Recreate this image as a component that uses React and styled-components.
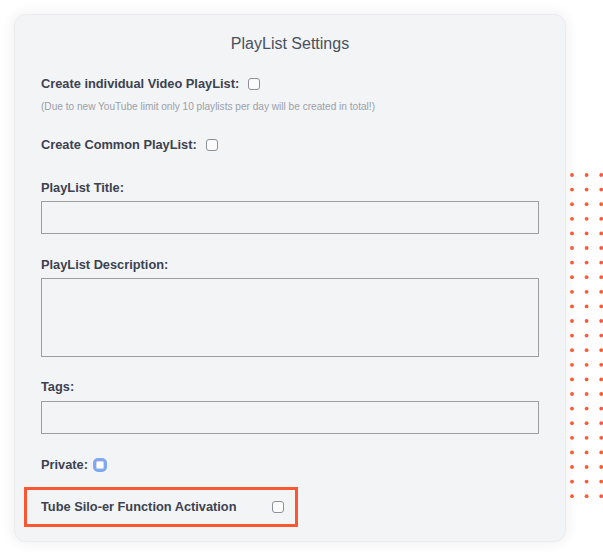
import React from "react";
import styled, { createGlobalStyle } from "styled-components";

const GlobalStyle = createGlobalStyle`
  html, body { margin: 0; padding: 0; background: #ffffff; }
  body { font-family: "Liberation Sans", Arial, Helvetica, sans-serif; }
  * { box-sizing: border-box; }
`;

const Page = styled.div`
  position: relative;
  width: 603px;
  height: 557px;
  padding: 14px 0 0 14px;
  overflow: hidden;
`;

const Dots = styled.svg`
  position: absolute;
  left: 568px;
  top: 171px;
  z-index: 0;
`;

const Card = styled.div`
  position: relative;
  z-index: 1;
  width: 552px;
  padding: 19px 26px 14px;
  background: #f3f4f6;
  border-radius: 12px;
  border: 1px solid #ebecef;
  box-shadow: 0 0 12px 3px rgba(0, 0, 0, 0.05);
  display: flex;
  flex-direction: column;
`;

const Title = styled.h2`
  margin: 0;
  font-size: 16px;
  line-height: 20px;
  font-weight: 400;
  color: #485060;
  text-align: center;
`;

const Row = styled.div`
  display: flex;
  align-items: center;
  height: 16px;
  margin-top: ${(p) => p.$mt}px;
`;

const Label = styled.label`
  display: block;
  font-size: 12.8px;
  line-height: 16px;
  font-weight: 700;
  color: #3b4250;
  margin-top: ${(p) => p.$mt || 0}px;
`;

const Note = styled.div`
  margin-top: 8px;
  font-size: 10.1px;
  line-height: 14px;
  color: #9ba0a8;
`;

const Check = styled.input.attrs({ type: "checkbox" })`
  appearance: none;
  -webkit-appearance: none;
  width: 12px;
  height: 12px;
  margin: 0 0 0 ${(p) => p.$ml || 0}px;
  border: 1px solid #8d9199;
  border-radius: 3px;
  background: #fbfbfc;
  flex: none;
`;

const FocusCheck = styled.input.attrs({ type: "checkbox" })`
  appearance: none;
  -webkit-appearance: none;
  width: 14px;
  height: 14px;
  margin: 0 0 0 5px;
  border: 3px solid #7ea8f1;
  border-radius: 5px;
  background: #ffffff;
  box-shadow: inset 0 0 0 1px #d7dbe2;
  flex: none;
`;

const TextInput = styled.input`
  display: block;
  width: 100%;
  height: 33px;
  margin-top: ${(p) => p.$mt}px;
  border: 1px solid #9c9ea3;
  background: transparent;
  outline: none;
`;

const TextArea = styled.textarea`
  display: block;
  width: 100%;
  height: 79px;
  margin-top: 5px;
  border: 1px solid #9c9ea3;
  background: transparent;
  resize: none;
  outline: none;
`;

const Highlight = styled.div`
  display: flex;
  align-items: center;
  justify-content: space-between;
  width: 274px;
  height: 40px;
  margin: 14px 0 0 -17px;
  padding: 0 11px 0 14px;
  border: 3px solid #fc5632;
`;

function DotGrid() {
  const cols = 3;
  const rows = 23;
  const dots = [];
  for (let r = 0; r < rows; r++) {
    for (let c = 0; c < cols; c++) {
      dots.push(
        <circle key={`${r}-${c}`} cx={4 + c * 14.6} cy={4 + r * 14.6} r={1.9} fill="#ff5a35" />
      );
    }
  }
  return (
    <Dots width="40" height="336" viewBox="0 0 40 336">
      {dots}
    </Dots>
  );
}

export default function App() {
  return (
    <>
      <GlobalStyle />
      <Page>
        <DotGrid />
        <Card>
          <Title>PlayList Settings</Title>
          <Row $mt={22}>
            <Label>Create individual Video PlayList:</Label>
            <Check $ml={9} />
          </Row>
          <Note>(Due to new YouTube limit only 10 playlists per day will be created in total!)</Note>
          <Row $mt={23}>
            <Label>Create Common PlayList:</Label>
            <Check $ml={9} />
          </Row>
          <Label $mt={27}>PlayList Title:</Label>
          <TextInput $mt={5} />
          <Label $mt={23}>PlayList Description:</Label>
          <TextArea />
          <Label $mt={22}>Tags:</Label>
          <TextInput $mt={6} />
          <Row $mt={23}>
            <Label>Private:</Label>
            <FocusCheck />
          </Row>
          <Highlight>
            <Label>Tube Silo-er Function Activation</Label>
            <Check />
          </Highlight>
        </Card>
      </Page>
    </>
  );
}
